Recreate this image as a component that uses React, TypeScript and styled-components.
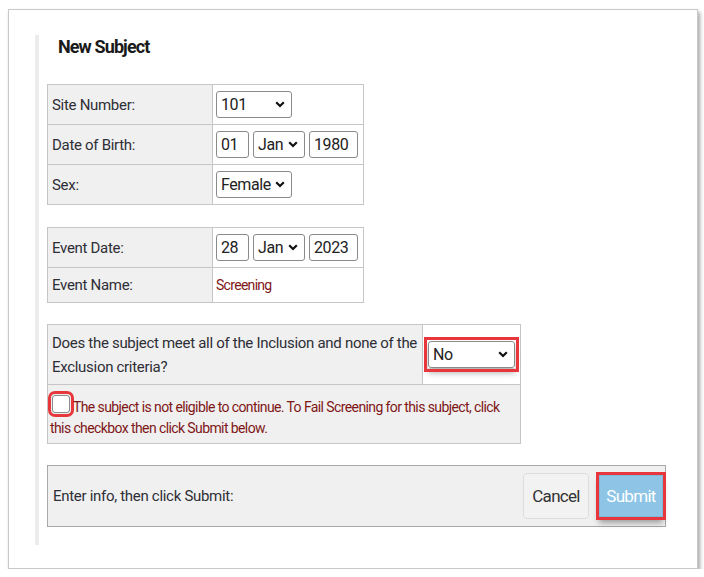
import styled, { createGlobalStyle } from 'styled-components'

const GlobalStyle = createGlobalStyle`
  body {
    margin: 0;
    background: #ffffff;
    font-family: 'Roboto', 'Liberation Sans', sans-serif;
    color: #333333;
  }
`

const StyledFrame = styled.div`
  margin: 9px 0 0 8px;
  width: 690px;
  height: 560px;
  box-sizing: border-box;
  border: 1px solid #c9c9c9;
  box-shadow: 2px 3px 4px rgba(0, 0, 0, 0.35);
  padding: 25px 0 0 26px;
`
const StyledPanel = styled.div`
  height: 510px;
  border-left: 4px solid #ececec;
  padding-left: 8px;
  box-sizing: border-box;
  display: flex;
  flex-direction: column;
  align-items: flex-start;
`
const StyledTitle = styled.h2`
  margin: 0 0 0 11px;
  font-size: 18px;
  font-weight: 700;
  letter-spacing: -0.9px;
  line-height: 24px;
  color: #1a1a1a;
`
const StyledTable = styled.table<{ $width: number; $top: number }>`
  width: ${({ $width }) => $width}px;
  margin-top: ${({ $top }) => $top}px;
  border-collapse: collapse;
  font-size: 15px;
  letter-spacing: -0.3px;
  table-layout: fixed;
`
const StyledLabel = styled.td<{ $height?: number }>`
  border: 1px solid #c6c6c6;
  background: #f0f0f0;
  padding: 0 4px;
  height: ${({ $height }) => $height ?? 39}px;
  line-height: 24px;
  color: #2e2e36;
`
const StyledValue = styled.td`
  border: 1px solid #c6c6c6;
  background: #ffffff;
  padding: 0 3px;
  white-space: nowrap;
`
const StyledFieldRow = styled.div`
  display: flex;
  gap: 4px;
  align-items: center;
`
const StyledRedText = styled.span`
  color: #7f1717;
  font-size: 14px;
  letter-spacing: -0.7px;
`
const StyledSelectWrap = styled.span<{ $width: number; $highlight?: boolean }>`
  position: relative;
  display: inline-block;
  vertical-align: middle;
  width: ${({ $width }) => $width}px;
  height: 27px;
  outline: ${({ $highlight }) => ($highlight ? '3px solid #e8363d' : 'none')};
  outline-offset: 1px;
  box-shadow: ${({ $highlight }) => ($highlight ? '0 5px 6px rgba(0,0,0,0.3)' : 'none')};
  border-radius: ${({ $highlight }) => ($highlight ? 0 : 3)}px;
`
const StyledSelect = styled.select`
  appearance: none;
  width: 100%;
  height: 100%;
  box-sizing: border-box;
  border: 1px solid #8a8a8a;
  border-radius: 3px;
  background: #ffffff;
  font-family: inherit;
  font-size: 16px;
  letter-spacing: -0.4px;
  color: #222222;
  padding: 0 0 0 4px;
`
const StyledChevron = styled.svg`
  position: absolute;
  right: 7px;
  top: 10px;
  width: 10px;
  height: 7px;
  pointer-events: none;
`
const StyledInput = styled.input<{ $width: number }>`
  width: ${({ $width }) => $width}px;
  height: 27px;
  box-sizing: border-box;
  border: 1px solid #8a8a8a;
  border-radius: 3px;
  font-family: inherit;
  font-size: 16px;
  letter-spacing: -0.4px;
  color: #222222;
  padding: 0 0 0 4px;
`
const StyledQuestionValue = styled.td`
  border: 1px solid #c6c6c6;
  background: #ffffff;
  padding: 0 0 0 5px;
`
const StyledNotice = styled.td`
  border: 1px solid #c6c6c6;
  background: #f0f0f0;
  padding: 12px 2px 2px 2px;
  height: 44px;
  line-height: 21px;
  color: #7f1717;
  font-size: 14px;
  letter-spacing: -0.6px;
  vertical-align: top;
`
const StyledCheckbox = styled.input`
  appearance: none;
  float: left;
  width: 18px;
  height: 18px;
  margin: -2px 3px 0 2px;
  border: 1px solid #8a8a8a;
  border-radius: 3px;
  background: #ffffff;
  outline: 3px solid #e8363d;
  outline-offset: 1px;
`
const StyledFooterBar = styled.div`
  margin-top: 21px;
  width: 619px;
  height: 62px;
  box-sizing: border-box;
  border: 1px solid #a9a9a9;
  background: #f0f0f0;
  display: flex;
  align-items: center;
  justify-content: space-between;
  padding-left: 5px;
  font-size: 15px;
  letter-spacing: -0.3px;
  color: #2e2e36;
`
const StyledActions = styled.div`
  display: flex;
  align-items: center;
  gap: 10px;
  margin-right: -2px;
`
const StyledButton = styled.button<{ $primary?: boolean }>`
  height: ${({ $primary }) => ($primary ? 42 : 46)}px;
  width: ${({ $primary }) => ($primary ? 64 : 66)}px;
  padding: 0;
  font-family: inherit;
  font-size: 17px;
  letter-spacing: -0.7px;
  border-radius: ${({ $primary }) => ($primary ? 0 : 4)}px;
  border: 1px solid ${({ $primary }) => ($primary ? '#7fb8db' : '#dddddd')};
  background: ${({ $primary }) => ($primary ? '#8ec5e6' : '#f2f2f2')};
  color: ${({ $primary }) => ($primary ? '#ffffff' : '#333333')};
  outline: ${({ $primary }) => ($primary ? '3px solid #e8363d' : 'none')};
  outline-offset: 0;
  box-shadow: ${({ $primary }) => ($primary ? '0 6px 6px rgba(0,0,0,0.35)' : 'none')};
  margin-right: ${({ $primary }) => ($primary ? 4 : 0)}px;
`

const Chevron = () => (
  <StyledChevron viewBox="0 0 10 7">
    <path d="M1.2 1.2 L5 5 L8.8 1.2" fill="none" stroke="#111" strokeWidth="2.2" />
  </StyledChevron>
)

const Select = ({ width, value, highlight }: { width: number; value: string; highlight?: boolean }) => (
  <StyledSelectWrap $width={width} $highlight={highlight}>
    <StyledSelect defaultValue={value}>
      <option>{value}</option>
    </StyledSelect>
    <Chevron />
  </StyledSelectWrap>
)

const App = () => {
  return (
    <>
      <GlobalStyle />
      <StyledFrame>
        <StyledPanel>
          <StyledTitle>New Subject</StyledTitle>
          <StyledTable $width={317} $top={25}>
            <colgroup>
              <col style={{ width: 165 }} />
              <col />
            </colgroup>
            <tbody>
              <tr>
                <StyledLabel>Site Number:</StyledLabel>
                <StyledValue>
                  <Select width={76} value="101" />
                </StyledValue>
              </tr>
              <tr>
                <StyledLabel>Date of Birth:</StyledLabel>
                <StyledValue>
                  <StyledFieldRow>
                    <StyledInput $width={33} defaultValue="01" />
                    <Select width={52} value="Jan" />
                    <StyledInput $width={49} defaultValue="1980" />
                  </StyledFieldRow>
                </StyledValue>
              </tr>
              <tr>
                <StyledLabel>Sex:</StyledLabel>
                <StyledValue>
                  <Select width={76} value="Female" />
                </StyledValue>
              </tr>
            </tbody>
          </StyledTable>
          <StyledTable $width={317} $top={22}>
            <colgroup>
              <col style={{ width: 165 }} />
              <col />
            </colgroup>
            <tbody>
              <tr>
                <StyledLabel>Event Date:</StyledLabel>
                <StyledValue>
                  <StyledFieldRow>
                    <StyledInput $width={33} defaultValue="28" />
                    <Select width={52} value="Jan" />
                    <StyledInput $width={49} defaultValue="2023" />
                  </StyledFieldRow>
                </StyledValue>
              </tr>
              <tr>
                <StyledLabel $height={34}>Event Name:</StyledLabel>
                <StyledValue>
                  <StyledRedText>Screening</StyledRedText>
                </StyledValue>
              </tr>
            </tbody>
          </StyledTable>
          <StyledTable $width={474} $top={21}>
            <colgroup>
              <col style={{ width: 375 }} />
              <col />
            </colgroup>
            <tbody>
              <tr>
                <StyledLabel $height={59}>
                  Does the subject meet all of the Inclusion and none of the Exclusion criteria?
                </StyledLabel>
                <StyledQuestionValue>
                  <Select width={87} value="No" highlight />
                </StyledQuestionValue>
              </tr>
              <tr>
                <StyledNotice colSpan={2}>
                  <StyledCheckbox type="checkbox" />
                  The subject is not eligible to continue. To Fail Screening for this subject, click
                  this checkbox then click Submit below.
                </StyledNotice>
              </tr>
            </tbody>
          </StyledTable>
          <StyledFooterBar>
            <span>Enter info, then click Submit:</span>
            <StyledActions>
              <StyledButton>Cancel</StyledButton>
              <StyledButton $primary>Submit</StyledButton>
            </StyledActions>
          </StyledFooterBar>
        </StyledPanel>
      </StyledFrame>
    </>
  )
}

export default App
